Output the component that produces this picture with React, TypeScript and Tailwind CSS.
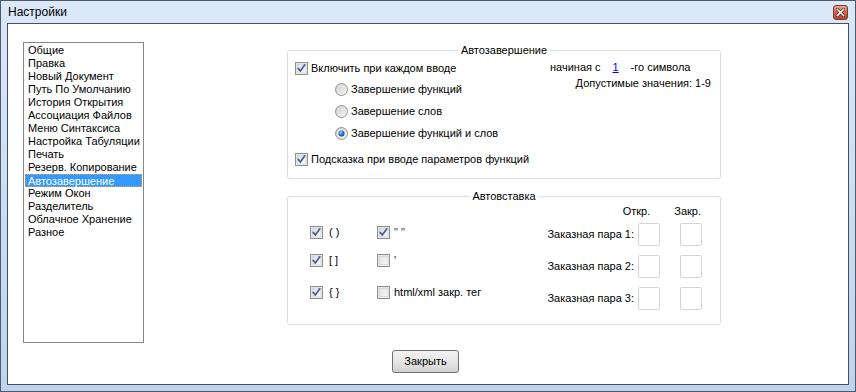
import React from "react";

const items = [
  "Общие",
  "Правка",
  "Новый Документ",
  "Путь По Умолчанию",
  "История Открытия",
  "Ассоциация Файлов",
  "Меню Синтаксиса",
  "Настройка Табуляции",
  "Печать",
  "Резерв. Копирование",
  "Автозавершение",
  "Режим Окон",
  "Разделитель",
  "Облачное Хранение",
  "Разное",
];

const CheckBox = ({ checked }: { checked: boolean }) => (
  <svg width="13" height="13" viewBox="0 0 13 13" className="shrink-0">
    <defs>
      <linearGradient id="cbFill" x1="0" y1="0" x2="1" y2="1">
        <stop offset="0" stopColor="#dcdcdc" />
        <stop offset="1" stopColor="#fbfbfb" />
      </linearGradient>
    </defs>
    <rect x="0.5" y="0.5" width="12" height="12" fill="#f4f4f4" stroke="#8e8f8f" />
    <rect x="2" y="2" width="9" height="9" fill="url(#cbFill)" stroke="#c4c4c4" strokeWidth="0.6" />
    {checked && (
      <path d="M3.2 6.4 L5.3 9 L9.8 2.8" fill="none" stroke="#4a5f97" strokeWidth="1.7" strokeLinecap="round" strokeLinejoin="round" />
    )}
  </svg>
);

const Radio = ({ checked }: { checked: boolean }) => (
  <svg width="13" height="13" viewBox="0 0 13 13" className="shrink-0">
    <defs>
      <linearGradient id="rbFill" x1="0" y1="0" x2="1" y2="1">
        <stop offset="0" stopColor="#c9c9c9" />
        <stop offset="1" stopColor="#fafafa" />
      </linearGradient>
      <radialGradient id="rbDot" cx="0.4" cy="0.35" r="0.7">
        <stop offset="0" stopColor="#9fd4ff" />
        <stop offset="0.5" stopColor="#2b7bd0" />
        <stop offset="1" stopColor="#0d3f7f" />
      </radialGradient>
    </defs>
    <circle cx="6.5" cy="6.5" r="6" fill="url(#rbFill)" stroke="#949494" />
    <circle cx="6.5" cy="6.5" r="4" fill="none" stroke="#e8e8e8" strokeWidth="0.8" />
    {checked && <circle cx="6.5" cy="6.5" r="3" fill="url(#rbDot)" />}
  </svg>
);

const Field = () => (
  <div className="w-[22px] h-[23px] border border-[#d2d6dc] rounded-[2px] bg-white" />
);

export default function App() {
  return (
    <div className="w-[856px] h-[392px] flex flex-col border border-[#4b5b6d] bg-gradient-to-b from-[#dae8f8] to-[#bed4ee] font-['Liberation_Sans',Arial,sans-serif] text-[11px] leading-[13px] text-black">
      {/* Title bar */}
      <div className="h-[22px] flex items-start justify-between pl-[7px] pr-[7px]">
        <span className="text-[12px] leading-[22px] text-black">Настройки</span>
        <div className="mt-[4px] w-[15px] h-[15px] rounded-[3px] border border-[#7b3a2c] bg-gradient-to-b from-[#e8a593] via-[#d2654c] to-[#b8402a] flex items-center justify-center">
          <svg width="9" height="9" viewBox="0 0 9 9">
            <path d="M1.5 1.5 L7.5 7.5 M7.5 1.5 L1.5 7.5" stroke="#4a1c12" strokeWidth="3" strokeLinecap="square" />
            <path d="M1.5 1.5 L7.5 7.5 M7.5 1.5 L1.5 7.5" stroke="#ffffff" strokeWidth="1.6" strokeLinecap="square" />
          </svg>
        </div>
      </div>

      {/* Client area */}
      <div className="flex-1 mx-[6px] mb-[6px] border border-[#46505c] bg-white flex flex-col">
        <div className="flex pt-[18px] pl-[15px]">
          {/* List */}
          <div className="w-[121px] h-[301px] border border-[#828790] p-[1px] shrink-0">
            {items.map((it) => (
              <div
                key={it}
                className={
                  it === "Автозавершение"
                    ? "h-[13px] leading-[12px] pl-[2px] bg-[#3399ff] text-white border border-dotted border-[#f0a030]"
                    : "h-[13px] leading-[13px] pl-[3px] whitespace-nowrap"
                }
              >
                {it}
              </div>
            ))}
          </div>

          {/* Right side */}
          <div className="ml-[143px] pt-[2px] flex flex-col">
            <fieldset className="w-[434px] h-[135px] border border-[#d5dfe5] rounded-[3px]">
              <legend className="mx-auto px-[3px] leading-[13px]">Автозавершение</legend>
              <div className="flex pl-[7px]">
                <div className="w-[255px] flex flex-col">
                  <div className="mt-[5px] h-[13px] flex items-center gap-[3px]">
                    <CheckBox checked />
                    <span>Включить при каждом вводе</span>
                  </div>
                  <div className="pl-[40px] flex flex-col">
                    <div className="mt-[8px] h-[13px] flex items-center gap-[3px]">
                      <Radio checked={false} />
                      <span>Завершение функций</span>
                    </div>
                    <div className="mt-[9px] h-[13px] flex items-center gap-[3px]">
                      <Radio checked={false} />
                      <span>Завершение слов</span>
                    </div>
                    <div className="mt-[9px] h-[13px] flex items-center gap-[3px]">
                      <Radio checked />
                      <span>Завершение функций и слов</span>
                    </div>
                  </div>
                  <div className="mt-[13px] h-[13px] flex items-center gap-[3px]">
                    <CheckBox checked />
                    <span className="whitespace-nowrap">Подсказка при вводе параметров функций</span>
                  </div>
                </div>
                <div className="w-[161px] flex flex-col">
                  <div className="mt-[4px] h-[13px] flex items-center whitespace-nowrap">
                    <span>начиная с</span>
                    <span className="w-[30px] text-center text-[#0000ff] underline">1</span>
                    <span>-го символа</span>
                  </div>
                  <div className="mt-[3px] h-[13px] text-right whitespace-nowrap">
                    Допустимые значения: 1-9
                  </div>
                </div>
              </div>
            </fieldset>

            <fieldset className="mt-[11px] w-[434px] h-[135px] border border-[#d5dfe5] rounded-[3px]">
              <legend className="mx-auto px-[3px] leading-[13px]">Автовставка</legend>
              <div className="flex justify-between">
                <div className="pl-[22px] flex flex-col">
                  <div className="mt-[23px] h-[13px] flex items-center">
                    <div className="w-[67px] flex items-center gap-[6px]">
                      <CheckBox checked />
                      <span>( )</span>
                    </div>
                    <div className="flex items-center gap-[4px]">
                      <CheckBox checked />
                      <span className="text-[#1c3a8a]">" "</span>
                    </div>
                  </div>
                  <div className="mt-[15px] h-[13px] flex items-center">
                    <div className="w-[67px] flex items-center gap-[6px]">
                      <CheckBox checked />
                      <span>[ ]</span>
                    </div>
                    <div className="flex items-center gap-[4px]">
                      <CheckBox checked={false} />
                      <span>'</span>
                    </div>
                  </div>
                  <div className="mt-[19px] h-[13px] flex items-center">
                    <div className="w-[67px] flex items-center gap-[6px]">
                      <CheckBox checked />
                      <span>{"{ }"}</span>
                    </div>
                    <div className="flex items-center gap-[4px]">
                      <CheckBox checked={false} />
                      <span className="whitespace-nowrap">html/xml закр. тег</span>
                    </div>
                  </div>
                </div>

                <div className="pr-[18px] flex flex-col">
                  <div className="mt-[2px] h-[13px] flex justify-end gap-[24px] pr-[1px]">
                    <span>Откр.</span>
                    <span>Закр.</span>
                  </div>
                  {[1, 2, 3].map((n) => (
                    <div
                      key={n}
                      className={(n === 1 ? "mt-[5px]" : "mt-[9px]") + " flex items-center justify-end"}
                    >
                      <span className="mr-[4px] whitespace-nowrap">Заказная пара {n}:</span>
                      <Field />
                      <div className="ml-[20px]">
                        <Field />
                      </div>
                    </div>
                  ))}
                </div>
              </div>
            </fieldset>
          </div>
        </div>

        {/* Bottom button */}
        <div className="mt-[7px] pl-[384px]">
          <button className="w-[67px] h-[23px] rounded-[3px] border border-[#707070] bg-gradient-to-b from-[#f2f2f2] via-[#e6e6e6] to-[#d2d2d2] text-[11px] leading-[21px] text-black">
            Закрыть
          </button>
        </div>
      </div>
    </div>
  );
}
